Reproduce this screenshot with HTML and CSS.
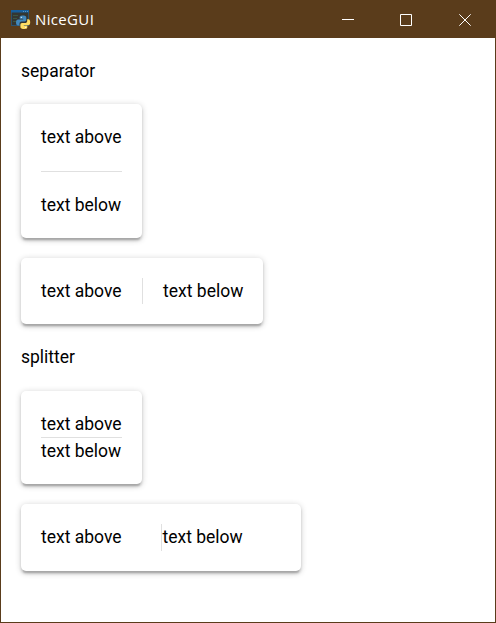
FILE: index.html
```
<!DOCTYPE html>
<html lang="en">
<head>
<meta charset="utf-8">
<title>NiceGUI</title>
<link rel="stylesheet" href="styles.css">
</head>
<body>
<div class="window">
  <header class="titlebar">
    <svg class="app-icon" width="20" height="20" viewBox="0 0 20 20">
      <rect x="0.5" y="0.5" width="17" height="15" fill="#343632" stroke="#2b5270"/>
      <rect x="0" y="0" width="18" height="2.500" fill="#165e9c"/>
      <path d="M12 1.500h1M14 1.500h1M16 1.500h1" stroke="#5c93c0"/>
      <path d="M2 5.500h5M2 8.500h4M2 11.500h3" stroke="#3c5840"/>
      <path d="M11.500 5.500c-2.600 0-2.800 1-2.800 2v1.300h3.500v.6H7.300c-1.500 0-2.300 1.200-2.300 3s.8 3 2 3h1.500v-1.700c0-1.300 1-2.200 2.200-2.200h3c1 0 1.600-.8 1.600-1.700V7.500c0-1.400-1.400-2-3.800-2z" fill="#4288bd"/>
      <path d="M13.500 19c2.600 0 2.800-1 2.800-2v-1.200h-3.500v-.6h4.300c1.500 0 2.100-1.200 2.100-3s-.7-3-1.900-3h-1.100v1.700c0 1.300-1 2.200-2.200 2.200h-3c-1 0-1.600.8-1.600 1.700V17c0 1.400 1.500 2 4.100 2z" fill="#ffdd63"/>
      <circle cx="10.300" cy="7.300" r=".6" fill="#fff"/>
      <circle cx="14.700" cy="17.300" r=".6" fill="#fff"/>
    </svg>
    <span class="title">NiceGUI</span>
    <div class="controls">
      <svg width="12" height="12" viewBox="0 0 12 12"><path d="M0 5.500h12"/></svg>
      <svg width="12" height="12" viewBox="0 0 12 12"><path d="M.5.500h11v11H.5z"/></svg>
      <svg class="close" width="12" height="12" viewBox="0 0 12 12"><path d="M.3.300l11.400 11.400M11.700.300L.3 11.700"/></svg>
    </div>
  </header>
  <main class="content">
    <div>separator</div>
    <div class="card column">
      <div>text above</div>
      <div class="line horizontal"></div>
      <div>text below</div>
    </div>
    <div class="card row">
      <div>text above</div>
      <div class="line vertical"></div>
      <div>text below</div>
    </div>
    <div>splitter</div>
    <div class="card splitter-column">
      <div>text above</div>
      <div class="line horizontal"></div>
      <div>text below</div>
    </div>
    <div class="card splitter-row">
      <div class="pane">text above</div>
      <div class="line vertical"></div>
      <div>text below</div>
    </div>
  </main>
</div>
</body>
</html>
```
FILE: styles.css
```
* { box-sizing: border-box; }
body { margin: 0; background: #fff; }
.window {
  display: flex;
  flex-direction: column;
  height: 623px;
  border: 1px solid #5a3c1b;
  overflow: hidden;
}
.titlebar {
  display: flex;
  align-items: center;
  flex: 0 0 37px;
  padding-left: 10px;
  background: #5a3c1b;
  color: #fff;
}
.app-icon { margin-top: 1px; }
.title {
  margin: 0 0 2px 4px;
  font: 15px/20px "Open Sans", "Noto Sans", sans-serif;
  letter-spacing: .35px;
}
.controls {
  display: flex;
  gap: 46px;
  margin-left: auto;
  padding-right: 24px;
}
.controls svg { fill: none; stroke: #fff; stroke-width: 1; }
.controls .close { margin-left: 1px; }
.content {
  display: flex;
  flex-direction: column;
  align-items: flex-start;
  gap: 20px;
  padding: 20px;
  color: #000;
  font: 17.5px/26.25px Roboto, sans-serif;
}
.card {
  display: flex;
  padding: 20px;
  border-radius: 5px;
  background: #fff;
  box-shadow: 0 1.25px 6.25px rgba(0, 0, 0, .2), 0 2.5px 2.5px rgba(0, 0, 0, .14), 0 3.75px 1.25px -2.5px rgba(0, 0, 0, .12);
}
.column { flex-direction: column; gap: 20px; }
.row { gap: 20px; }
.splitter-column { flex-direction: column; }
.splitter-row { width: 280px; }
.pane { width: 120px; }
.line { flex: 0 0 1px; background: #e0e0e0; }
.horizontal { margin-bottom: .25px; }
.vertical { margin-right: .5px; }
```
